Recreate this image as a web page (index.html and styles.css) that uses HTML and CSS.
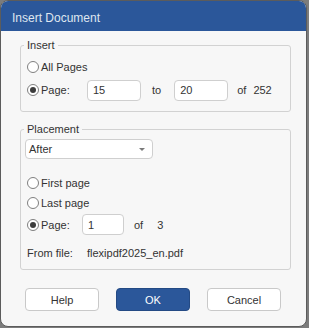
FILE: index.html
```html
<!DOCTYPE html>
<html>
<head>
<meta charset="utf-8">
<link rel="stylesheet" href="styles.css">
</head>
<body>
<div class="window">
  <div class="titlebar">Insert Document</div>
  <div class="content">
    <fieldset class="group group-insert">
      <legend>Insert</legend>
      <label class="row">
        <input type="radio" name="ins" class="radio">
        <span>All Pages</span>
      </label>
      <div class="row">
        <input type="radio" name="ins" class="radio" checked>
        <span class="lbl-page">Page:</span>
        <input type="text" class="field field-range" value="15">
        <span class="to">to</span>
        <input type="text" class="field field-range" value="20">
        <span class="of">of</span>
        <span class="count">252</span>
      </div>
    </fieldset>

    <fieldset class="group group-place">
      <legend>Placement</legend>
      <div class="select">
        <span>After</span>
        <span class="caret"></span>
      </div>
      <label class="row first">
        <input type="radio" name="pl" class="radio">
        <span>First page</span>
      </label>
      <label class="row last">
        <input type="radio" name="pl" class="radio">
        <span>Last page</span>
      </label>
      <div class="row pagerow">
        <input type="radio" name="pl" class="radio" checked>
        <span class="lbl-page2">Page:</span>
        <input type="text" class="field field-small" value="1">
        <span class="of2">of</span>
        <span>3</span>
      </div>
      <div class="row file">
        <span class="lbl-file">From file:</span>
        <span>flexipdf2025_en.pdf</span>
      </div>
    </fieldset>

    <div class="buttons">
      <button class="btn">Help</button>
      <button class="btn btn-primary">OK</button>
      <button class="btn">Cancel</button>
    </div>
  </div>
</div>
</body>
</html>
```

FILE: styles.css
```css
html, body {
  margin: 0;
  padding: 0;
}
body {
  background: #7c7c7c;
  width: 309px;
  height: 328px;
  font-family: "Liberation Sans", Arial, sans-serif;
  font-size: 11px;
  color: #333;
}
.window {
  box-sizing: border-box;
  width: 307px;
  height: 327px;
  border: 1px solid #5c5c5c;
  border-radius: 8px;
  overflow: hidden;
  background: #f7f7f7;
  display: flex;
  flex-direction: column;
}
.titlebar {
  height: 30px;
  background: #2b579a;
  color: #dfe6f0;
  font-size: 12px;
  line-height: 34px;
  padding-left: 11px;
  flex: none;
}
.content {
  padding: 7px 15px 0 19px;
  display: flex;
  flex-direction: column;
}
.group {
  margin: 0;
  border: 1px solid #d2d2d2;
  border-radius: 3px;
  padding: 0 4px;
  min-width: 0;
}
.group legend {
  padding: 0 3px;
  margin-left: -1px;
  line-height: 14px;
  color: #333;
}
.group-insert {
  padding-top: 5px;
  padding-bottom: 11px;
}
.group-place {
  margin-top: 10px;
  padding-top: 3px;
  padding-bottom: 6px;
}
.row {
  display: flex;
  align-items: center;
  height: 20px;
  margin-left: 2px;
}
.row + .row {
  margin-top: 3px;
}
.row.first {
  margin-top: 14px;
}
.row.last {
  margin-top: 0;
}
.row.pagerow {
  margin-top: 1px;
  height: 21px;
}
.radio {
  -webkit-appearance: none;
  appearance: none;
  box-sizing: border-box;
  width: 12px;
  height: 12px;
  margin: 0 2px 0 0;
  border: 1px solid #7f7f7f;
  border-radius: 50%;
  background: #fff;
  position: relative;
  flex: none;
}
.radio:checked::after {
  content: "";
  position: absolute;
  left: 2px;
  top: 2px;
  width: 6px;
  height: 6px;
  border-radius: 50%;
  background: #3c3c3c;
}
.field {
  box-sizing: border-box;
  height: 21px;
  border: 1px solid #cfcfcf;
  border-radius: 4px;
  background: #fff;
  font-family: inherit;
  font-size: 11px;
  color: #333;
  padding: 0 5px;
  margin: 0;
  outline: none;
}
.field-range {
  width: 54px;
}
.field-small {
  width: 42px;
}
.lbl-page {
  width: 46px;
}
.to {
  margin: 0 13px 0 11px;
}
.of {
  margin: 0 7px 0 9px;
}
.lbl-page2 {
  width: 41px;
}
.of2 {
  margin: 0 14px 0 10px;
}
.select {
  box-sizing: border-box;
  width: 128px;
  height: 20px;
  margin: 0;
  border: 1px solid #cfcfcf;
  border-radius: 4px;
  background: #fff;
  display: flex;
  align-items: center;
  justify-content: space-between;
  padding: 0 7px 0 3px;
}
.caret {
  width: 0;
  height: 0;
  border-left: 3px solid transparent;
  border-right: 3px solid transparent;
  border-top: 3px solid #7a7a7a;
}
.row.file {
  margin-top: 8px;
  margin-left: 2px;
}
.lbl-file {
  width: 60px;
}
.buttons {
  display: flex;
  gap: 17px;
  margin-top: 18px;
  padding-left: 5px;
}
.btn {
  box-sizing: border-box;
  width: 74px;
  height: 23px;
  border: 1px solid #c9c9c9;
  border-radius: 4px;
  background: #fff;
  font-family: inherit;
  font-size: 11px;
  color: #333;
  padding: 0;
  margin: 0;
}
.btn-primary {
  background: #2b579a;
  border-color: #244a84;
  color: #fff;
}
```
